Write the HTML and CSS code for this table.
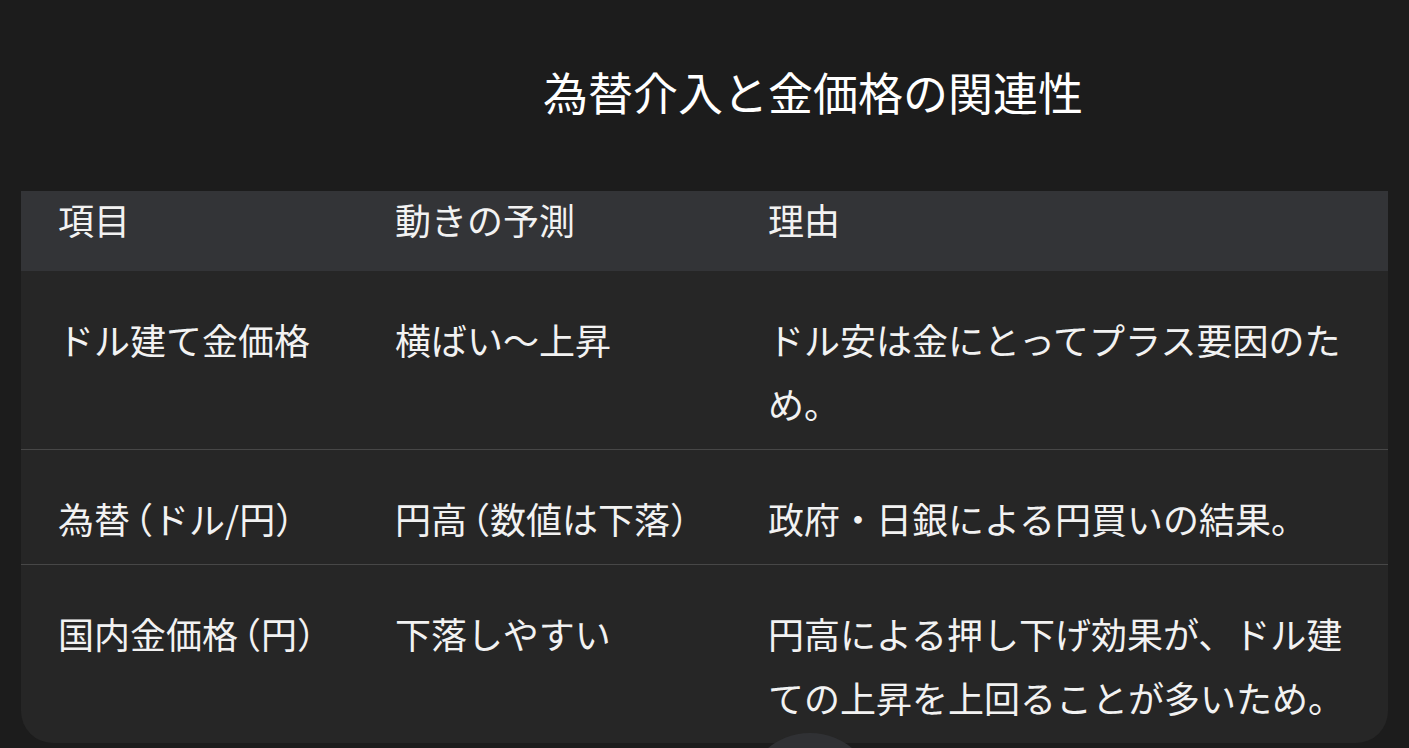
FILE: index.html
```html
<!DOCTYPE html>
<html lang="ja">
<head>
<meta charset="utf-8">
<title>為替介入と金価格の関連性</title>
<link rel="stylesheet" href="styles.css">
</head>
<body>
<main class="page">
  <h1 class="title">為替介入と金価格の関連性</h1>
  <div class="table-wrap">
    <table class="data">
      <colgroup>
        <col class="c1"><col class="c2"><col class="c3">
      </colgroup>
      <thead>
        <tr><th>項目</th><th>動きの予測</th><th>理由</th></tr>
      </thead>
      <tbody>
        <tr><td>ドル建て金価格</td><td>横ばい〜上昇</td><td>ドル安は金にとってプラス要因のため。</td></tr>
        <tr><td>為替<span class="p open">（</span>ドル/円<span class="p">）</span></td><td>円高<span class="p open">（</span>数値は下落<span class="p">）</span></td><td>政府・日銀による円買いの結果。</td></tr>
        <tr><td>国内金価格<span class="p open">（</span>円<span class="p">）</span></td><td>下落しやすい</td><td>円高による押し下げ効果が、ドル建ての上昇を上回ることが多いため。</td></tr>
      </tbody>
    </table>
  </div>
  <div class="scroll-btn"></div>
</main>
</body>
</html>
```

FILE: styles.css
```css
html, body {
  margin: 0;
  padding: 0;
  background: #1c1c1c;
  height: 748px;
  overflow: hidden;
}
.page {
  position: relative;
  height: 748px;
  font-family: "Noto Sans CJK JP", "Noto Sans", sans-serif;
  color: #f2f2f2;
}
.title {
  margin: 0;
  padding: 62px 0 0 543px;
  font-size: 45px;
  line-height: 60px;
  font-weight: 400;
  color: #ffffff;
}
.table-wrap {
  margin: 69px 0 0 21px;
  width: 1367px;
  background: #262626;
  border-radius: 0 0 32px 32px;
  overflow: hidden;
}
.data {
  width: 100%;
  border-collapse: collapse;
  table-layout: fixed;
  font-size: 36px;
}
.c1 { width: 337px; }
.c2 { width: 373px; }
.c3 { width: 657px; }
.data th {
  background: #333437;
  font-weight: 400;
  text-align: left;
  line-height: 56px;
  padding: 0 37px 24px;
  vertical-align: top;
}
.data td {
  line-height: 64px;
  padding: 36px 37px 14px;
  vertical-align: top;
}
.data tbody tr + tr td {
  border-top: 1px solid #474747;
}
.p {
  font-feature-settings: "halt" 1;
}
.p.open {
  margin-left: 5px;
}
.scroll-btn {
  position: absolute;
  left: 744px;
  top: 733px;
  width: 132px;
  height: 132px;
  border-radius: 50%;
  background: #303134;
}
```
